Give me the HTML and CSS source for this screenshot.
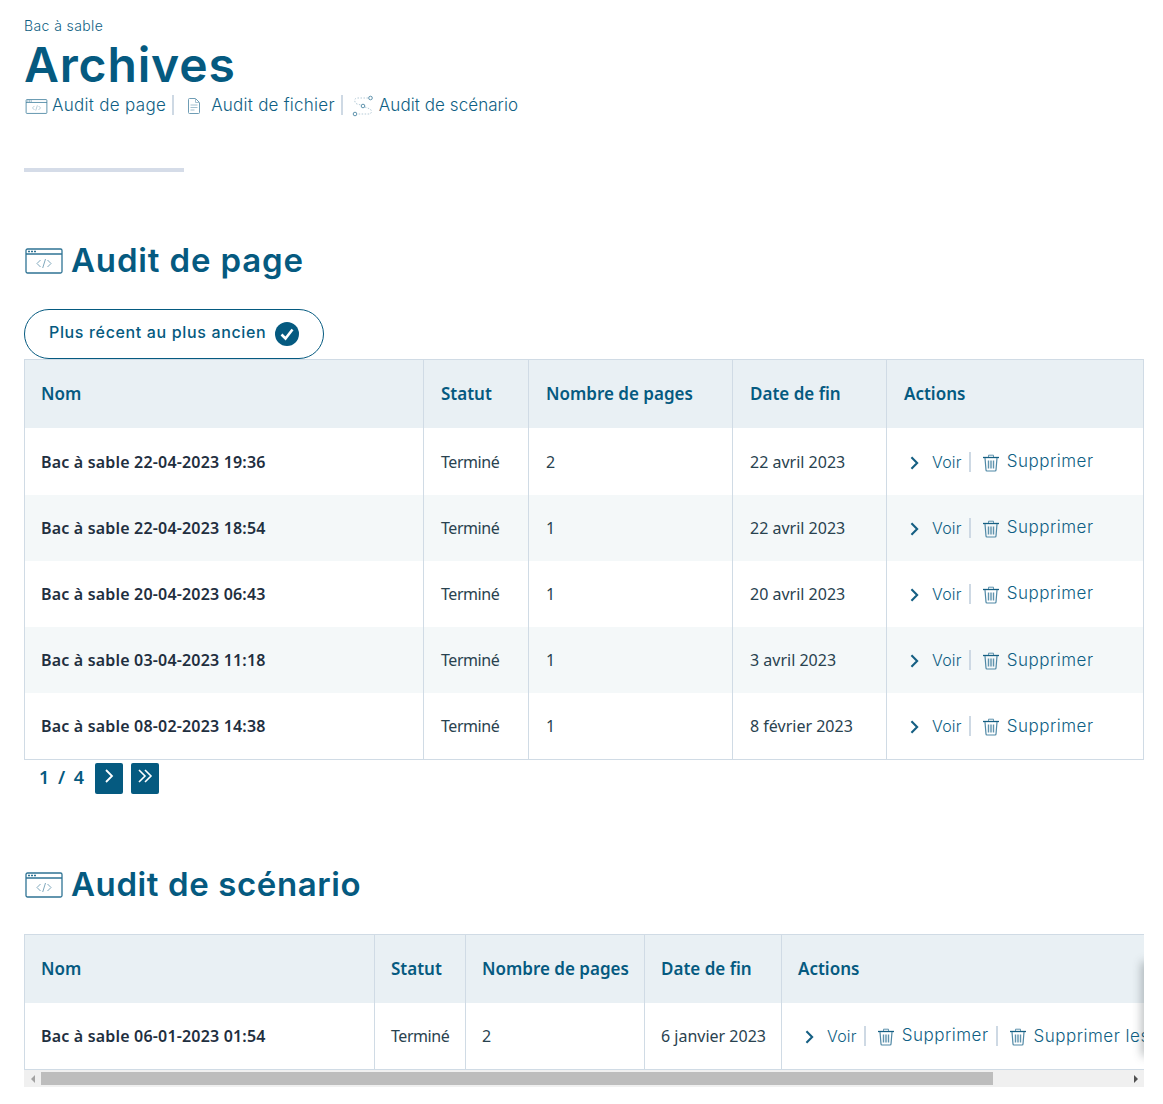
FILE: index.html
```html
<!DOCTYPE html>
<html lang="fr">
<head>
<meta charset="utf-8">
<title>Archives</title>
<link rel="stylesheet" href="styles.css">
</head>
<body>
<svg class="defs" width="0" height="0" aria-hidden="true">
  <symbol id="i-window" viewBox="0 0 38 26">
    <rect x="1" y="1" width="36" height="24" rx="1.5" fill="#fff" stroke="#2f7394" stroke-width="1.3"/>
    <path d="M1 6h36" stroke="#2f7394" stroke-width="1.3"/>
    <path d="M3 3.500h2M6 3.500h2M9 3.500h2" stroke="#2f7394" stroke-width="1.400"/>
    <path d="M15.500 12l-3.500 3.500 3.500 3.500M22.500 12l3.500 3.500-3.500 3.500M20.500 11l-2.800 9" fill="none" stroke="#7fa8bd" stroke-width="1"/>
  </symbol>
  <symbol id="i-doc" viewBox="0 0 14 18">
    <path d="M1.500 2.500a1 1 0 0 1 1-1h6l4 4v10a1 1 0 0 1-1 1h-9a1 1 0 0 1-1-1z" fill="#fff" stroke="#6f9db5"/>
    <path d="M8.500 1.500v4h4M3.500 8h7M3.500 10.500h7M3.500 13h4" fill="none" stroke="#a3c0cf"/>
  </symbol>
  <symbol id="i-scen" viewBox="0 0 22 22">
    <circle cx="18.500" cy="3" r="1.800" fill="none" stroke="#5f93ad"/>
    <circle cx="11" cy="11" r="1.800" fill="none" stroke="#5f93ad"/>
    <circle cx="3" cy="19" r="1.800" fill="none" stroke="#5f93ad"/>
    <path d="M16 3H5C2 3 2 8 5 9l4 1M13 12l5 2c2 1 2 5-1 5H6" fill="none" stroke="#b5cbd7" stroke-dasharray="1.500 1.500"/>
  </symbol>
  <symbol id="i-chev" viewBox="0 0 10 16">
    <path d="M1.500 1.500L8 8l-6.500 6.500" fill="none" stroke="#155f83" stroke-width="2.400"/>
  </symbol>
  <symbol id="i-trash" viewBox="0 0 16 18">
    <path d="M0 3.500h16" stroke="#155f83" stroke-width="1.300"/>
    <path d="M5.500 3V1.200h5V3" fill="none" stroke="#5f93ad"/>
    <path d="M2 4l1 12a1 1 0 0 0 1 1h8a1 1 0 0 0 1-1l1-12" fill="none" stroke="#4f88a5" stroke-width="1.200"/>
    <path d="M5.500 6.500v8M8 6.500v8M10.500 6.500v8" stroke="#5f93ad" stroke-width="1.400"/>
  </symbol>
</svg>

<header class="top">
  <p class="crumb">Bac à sable</p>
  <h1 class="title">Archives</h1>
  <nav class="subnav">
    <a class="subnav-link"><svg class="ic-nav-window"><use href="#i-window"/></svg>Audit de page</a>
    <span class="sep"></span>
    <a class="subnav-link subnav-file"><svg class="ic-nav-doc"><use href="#i-doc"/></svg>Audit de fichier</a>
    <span class="sep"></span>
    <a class="subnav-link subnav-scen"><svg class="ic-nav-scen"><use href="#i-scen"/></svg>Audit de scénario</a>
  </nav>
  <div class="rule"></div>
</header>

<section class="sec-page">
  <h2 class="sec-title"><svg class="ic-sec"><use href="#i-window"/></svg>Audit de page</h2>
  <button class="sort"><span class="sort-label">Plus récent au plus ancien</span>
    <svg class="ic-check" viewBox="0 0 24 24"><circle cx="12" cy="12" r="12" fill="#055a80"/><path d="M6.500 12.500l4 4 7-9" fill="none" stroke="#fff" stroke-width="2.600"/></svg>
  </button>
  <table class="grid grid-main">
    <colgroup><col class="a1"><col class="a2"><col class="a3"><col class="a4"><col></colgroup>
    <thead><tr><th>Nom</th><th>Statut</th><th>Nombre de pages</th><th>Date de fin</th><th>Actions</th></tr></thead>
    <tbody>
      <tr><td class="name">Bac à sable 22-04-2023 19:36</td><td class="st">Terminé</td><td>2</td><td>22 avril 2023</td><td><div class="acts"><a class="act act-voir"><svg class="ic-chev"><use href="#i-chev"/></svg>Voir</a><span class="sep"></span><a class="act"><svg class="ic-trash"><use href="#i-trash"/></svg><span class="sup up">Supprimer</span></a></div></td></tr>
      <tr><td class="name">Bac à sable 22-04-2023 18:54</td><td class="st">Terminé</td><td>1</td><td>22 avril 2023</td><td><div class="acts"><a class="act act-voir"><svg class="ic-chev"><use href="#i-chev"/></svg>Voir</a><span class="sep"></span><a class="act"><svg class="ic-trash"><use href="#i-trash"/></svg><span class="sup up">Supprimer</span></a></div></td></tr>
      <tr><td class="name">Bac à sable 20-04-2023 06:43</td><td class="st">Terminé</td><td>1</td><td>20 avril 2023</td><td><div class="acts"><a class="act act-voir"><svg class="ic-chev"><use href="#i-chev"/></svg>Voir</a><span class="sep"></span><a class="act"><svg class="ic-trash"><use href="#i-trash"/></svg><span class="sup up">Supprimer</span></a></div></td></tr>
      <tr><td class="name">Bac à sable 03-04-2023 11:18</td><td class="st">Terminé</td><td>1</td><td>3 avril 2023</td><td><div class="acts"><a class="act act-voir"><svg class="ic-chev"><use href="#i-chev"/></svg>Voir</a><span class="sep"></span><a class="act"><svg class="ic-trash"><use href="#i-trash"/></svg><span class="sup">Supprimer</span></a></div></td></tr>
      <tr><td class="name">Bac à sable 08-02-2023 14:38</td><td class="st">Terminé</td><td>1</td><td>8 février 2023</td><td><div class="acts"><a class="act act-voir"><svg class="ic-chev"><use href="#i-chev"/></svg>Voir</a><span class="sep"></span><a class="act"><svg class="ic-trash"><use href="#i-trash"/></svg><span class="sup">Supprimer</span></a></div></td></tr>
    </tbody>
  </table>
  <div class="pager">
    <span class="pager-text">1 / 4</span>
    <button class="pg"><svg viewBox="0 0 12 16" class="pg-ic"><path d="M3 2l6 6-6 6" fill="none" stroke="#fff" stroke-width="1.800"/></svg></button>
    <button class="pg"><svg viewBox="0 0 16 16" class="pg-ic2"><path d="M2 2l6 6-6 6M8 2l6 6-6 6" fill="none" stroke="#fff" stroke-width="1.600"/></svg></button>
  </div>
</section>

<section class="sec-scen">
  <h2 class="sec-title sec-title-scen"><svg class="ic-sec"><use href="#i-window"/></svg>Audit de scénario</h2>
  <div class="scroller">
    <div class="clip">
      <table class="grid grid-wide">
        <colgroup><col class="b1"><col class="b2"><col class="b3"><col class="b4"><col class="b5"></colgroup>
        <thead><tr><th>Nom</th><th>Statut</th><th>Nombre de pages</th><th>Date de fin</th><th>Actions</th></tr></thead>
        <tbody>
          <tr><td class="name">Bac à sable 06-01-2023 01:54</td><td class="st">Terminé</td><td>2</td><td>6 janvier 2023</td><td><div class="acts"><a class="act act-voir"><svg class="ic-chev"><use href="#i-chev"/></svg>Voir</a><span class="sep"></span><a class="act"><svg class="ic-trash"><use href="#i-trash"/></svg><span class="sup up">Supprimer</span></a><span class="sep"></span><a class="act"><svg class="ic-trash"><use href="#i-trash"/></svg><span class="sup">Supprimer les rapports</span></a></div></td></tr>
        </tbody>
      </table>
      <div class="fade"></div>
    </div>
    <div class="scrollbar">
      <span class="arrow arrow-l"></span>
      <div class="track"><div class="thumb"></div></div>
      <span class="arrow arrow-r"></span>
    </div>
  </div>
</section>
</body>
</html>
```

FILE: styles.css
```css
* { box-sizing: border-box; }
html, body { margin: 0; padding: 0; background: #fff; }
body {
  height: 1104px;
  overflow: hidden;
  padding: 0 19px 0 24px;
  color: #055a80;
  font-family: "Inter", "Liberation Sans", sans-serif;
}
.defs { position: absolute; }
svg { display: block; flex: none; }

.top { height: 172px; }
.crumb { margin: 0; padding-top: 17px; height: 36px; font-size: 14px; line-height: 18px; font-weight: 300; letter-spacing: .4px; color: #0f5f84; }
.title { margin: 0; height: 56px; font-size: 48px; line-height: 58px; font-weight: 600; letter-spacing: .85px; color: #055a80; }
.subnav { display: flex; align-items: center; height: 24px; margin-top: 1px; font-size: 17px; font-weight: 300; letter-spacing: .3px; color: #0f5f84; }
.subnav-link { display: flex; align-items: center; }
.subnav-file { letter-spacing: .25px; }
.subnav-scen { letter-spacing: .07px; }
.ic-nav-window { width: 23px; height: 15px; margin: 2px 4px 0 1px; }
.ic-nav-doc { width: 14px; height: 18px; margin: 2px 10px 0 13px; }
.ic-nav-scen { width: 22px; height: 22px; margin: 2px 5px 0 9px; }
.sep { display: block; flex: none; width: 2px; height: 20px; margin-left: 6px; background: #ced9e4; }
.rule { width: 160px; height: 4px; margin-top: 51px; background: #d5dce8; }

.sec-page { padding-top: 67px; }
.sec-title { display: flex; align-items: center; margin: 0; height: 42px; font-size: 33px; line-height: 42px; font-weight: 600; letter-spacing: .85px; color: #055a80; }
.sec-title-scen { letter-spacing: .6px; }
.ic-sec { width: 38px; height: 26px; margin: 2px 8px 0 1px; }

.sort {
  display: flex; align-items: center; gap: 9px;
  width: 300px; height: 50px; margin-top: 28px; padding: 0 0 0 24px;
  border: 1px solid #055a80; border-radius: 25px; background: #fff;
  font: 500 16px/20px "Inter", "Liberation Sans", sans-serif; letter-spacing: .65px; color: #055a80;
}
.sort-label { margin-top: -4px; }
.ic-check { width: 24px; height: 24px; }

.grid {
  width: 1120px; border-collapse: collapse; table-layout: fixed;
  font-family: "Noto Sans", "Liberation Sans", sans-serif;
  font-size: 16px;
}
.a1 { width: 399px; }
.a2 { width: 105px; }
.a3 { width: 204px; }
.a4 { width: 154px; }
.b1 { width: 350px; }
.b2 { width: 91px; }
.b3 { width: 179px; }
.b4 { width: 137px; }
.b5 { width: 500px; }
.grid th, .grid td { border: 1px solid #d0dbe5; padding: 0 0 0 16px; text-align: left; }
.grid-main th + th, .grid-main td + td { padding-left: 17px; }
.grid tbody td { border-top: 0; border-bottom: 0; height: 66px; color: #29424f; }
.grid tbody tr:first-child td { height: 67px; }
.grid tbody tr:last-child td { border-bottom: 1px solid #d0dbe5; height: 66.500px; }
.grid tbody tr:nth-child(even) { background: #f4f8f9; }
.grid thead th { height: 68.500px; padding-bottom: 2px; background: #e9f0f4; font-size: 17px; font-weight: 600; color: #055a80; border-bottom: 0; }
.grid tbody td.name { font-weight: 600; letter-spacing: .18px; color: #1f2f3f; }
.grid tbody td.st { letter-spacing: -.45px; }

.acts { display: flex; align-items: center; font-family: "Inter", "Liberation Sans", sans-serif; font-size: 16px; font-weight: 300; letter-spacing: .2px; color: #0f5f84; }
.act { display: flex; align-items: center; white-space: nowrap; }
.act-voir { padding-left: 7px; }
.grid-main .act-voir { padding-left: 6px; }
.ic-chev { width: 9px; height: 14px; margin: 2px 13px 0 0; }
.ic-trash { width: 16px; height: 18px; margin: 2px 8px 0 12px; }
.acts .sep { margin-left: 7px; }
.sup { font-size: 17px; letter-spacing: .5px; }
.up { margin-top: -2px; }

.pager { display: flex; align-items: center; height: 32px; margin-top: 2px; }
.pager-text { width: 71px; padding: 0 0 2px 15px; font: 600 18px/24px "Noto Sans", sans-serif; letter-spacing: 2px; color: #055a80; }
.pg { display: flex; align-items: center; justify-content: center; width: 28px; height: 31px; margin-right: 8px; padding: 0 0 4px; border: 0; border-radius: 2px; background: #055a80; }
.pg-ic { width: 12px; height: 16px; }
.pg-ic2 { width: 16px; height: 16px; }

.sec-scen { padding-top: 69px; }
.scroller { width: 1120px; margin-top: 29px; }
.clip { position: relative; overflow: hidden; height: 136px; }
.grid-wide { width: 1257px; }
.fade { position: absolute; right: -5px; top: 30px; width: 5px; height: 90px; box-shadow: 0 0 10px 2px rgba(60,70,75,.4); }
.scrollbar { display: flex; align-items: center; height: 17px; background: #f0f0f0; }
.arrow { flex: none; width: 17px; display: flex; justify-content: center; }
.arrow-l::before { content: ""; border: 4px solid transparent; border-left-width: 0; border-right: 4px solid #a3a3a3; }
.arrow-r::before { content: ""; border: 4px solid transparent; border-right-width: 0; border-left: 4px solid #505050; }
.track { flex: 1; height: 13px; }
.thumb { width: 952px; height: 13px; background: #bdbdbd; }
```
